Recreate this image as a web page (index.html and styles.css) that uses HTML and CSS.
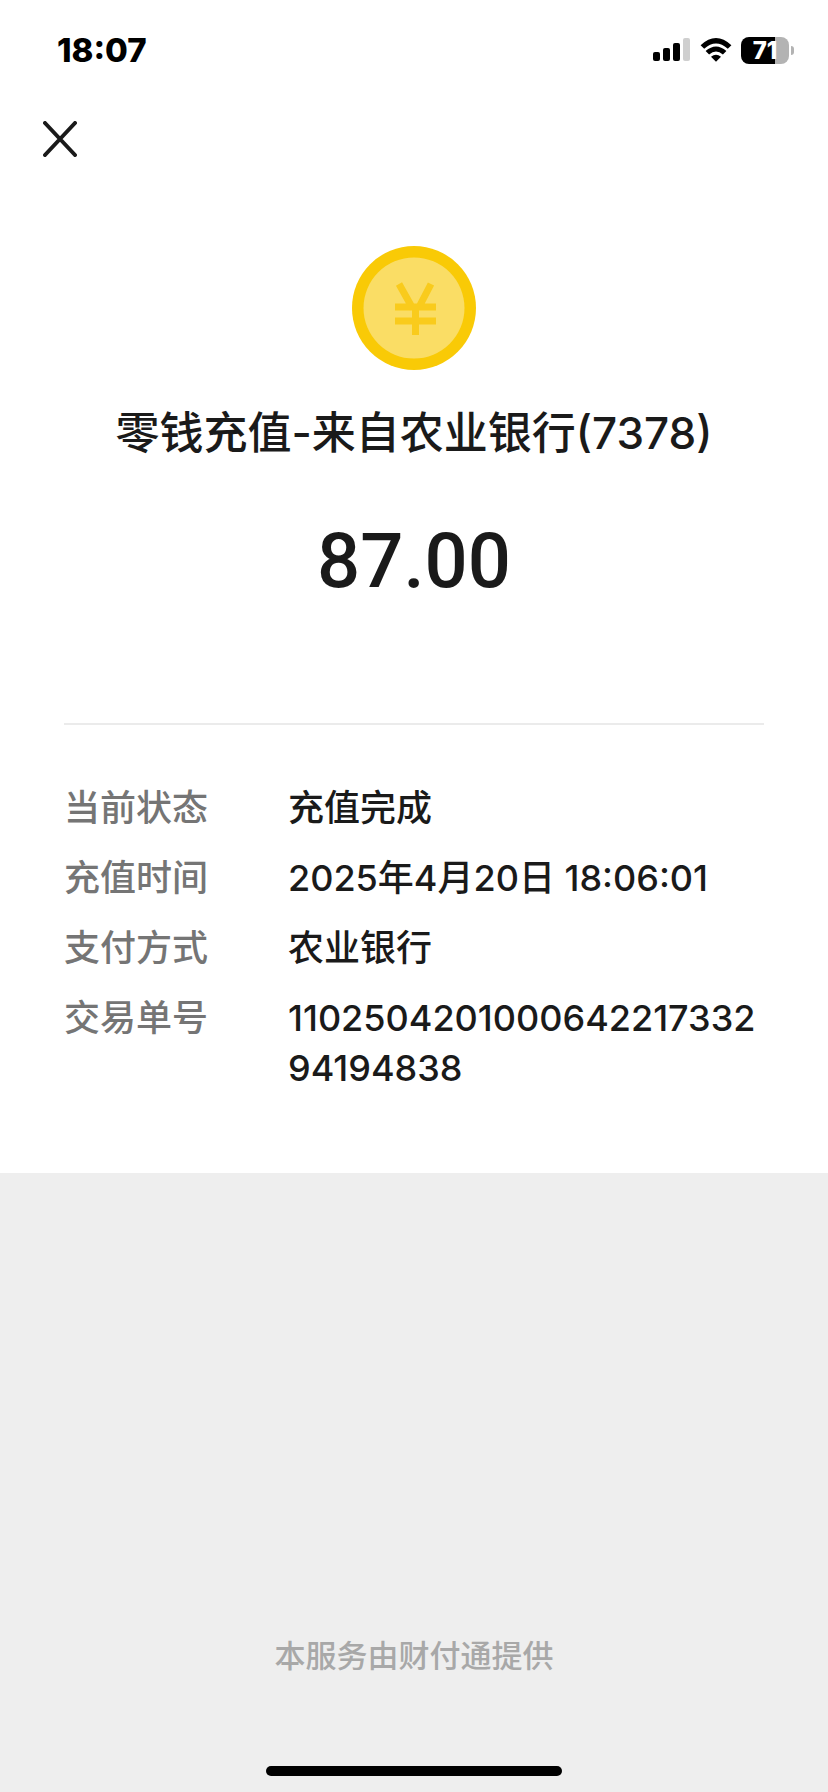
FILE: index.html
```html
<!DOCTYPE html>
<html lang="zh-CN">
<head>
  <meta charset="UTF-8" />
  <meta name="viewport" content="width=device-width, initial-scale=1" />
  <title>零钱充值</title>
  <link rel="stylesheet" href="styles.css">
</head>
<body>
  <div class="sheet">
    <div class="status-bar">
      <span class="time">18:07</span>
      <div class="status-icons">
        <svg class="signal" viewBox="0 0 38 24" aria-hidden="true">
          <rect x="0" y="14" width="7" height="9" rx="2" />
          <rect x="10" y="10" width="7" height="13" rx="2" />
          <rect x="20" y="5" width="7" height="18" rx="2" />
          <rect x="30" y="0" width="7" height="23" rx="2" fill="#cfcfcf" />
        </svg>
        <svg class="wifi" viewBox="0 0 32 24" aria-hidden="true">
          <path d="M0.6 7.2 Q16 -7.2 31.4 7.2 L27.8 10.8 Q16 0.2 4.2 10.8 Z" />
          <path d="M5.6 12.9 Q16 3.9 26.4 12.9 L22.9 16.4 Q16 10.8 9.1 16.4 Z" />
          <path d="M11 18.8 Q16 14.8 21 18.8 L16 23.8 Z" />
        </svg>
        <div class="battery">
          <div class="battery-body">71</div>
          <div class="battery-cap"></div>
        </div>
      </div>
    </div>

    <div class="nav">
      <button class="close" aria-label="关闭">
        <svg viewBox="0 0 34 36"><path d="M2 2 L32 34 M32 2 L2 34" /></svg>
      </button>
    </div>

    <div class="summary">
      <svg class="coin" viewBox="0 0 124 124" aria-hidden="true">
        <circle cx="62" cy="62" r="62" fill="#f9ca06" />
        <circle cx="62" cy="62" r="50.5" fill="#fadd65" />
        <path d="M47 38 L61 63 M79 38 L66 63 M43 61 H84 M43 75 H84 M63.5 60 V89" fill="none" stroke="#f9cb1c" stroke-width="7" />
      </svg>
      <h1 class="title">零钱充值-来自农业银行(7378)</h1>
      <div class="amount">87.00</div>
    </div>

    <dl class="details">
      <div class="row"><dt>当前状态</dt><dd>充值完成</dd></div>
      <div class="row"><dt>充值时间</dt><dd>2025年4月20日 18:06:01</dd></div>
      <div class="row"><dt>支付方式</dt><dd>农业银行</dd></div>
      <div class="row"><dt>交易单号</dt><dd>110250420100064221733294194838</dd></div>
    </dl>
  </div>

  <div class="footer">
    <p class="provider">本服务由财付通提供</p>
    <div class="home-indicator"></div>
  </div>
</body>
</html>
```
FILE: styles.css
```css
* { box-sizing: border-box; }
body {
  font-family: Inter, "Noto Sans CJK SC", sans-serif;
  margin: 0;
  min-height: 100vh;
  background: #eee;
  color: #1a1a1a;
  display: flex;
  flex-direction: column;
}
.sheet {
  background: #fff;
  padding-bottom: 80px;
}
.status-bar {
  height: 100px;
  padding: 0 34px 0 57px;
  display: flex;
  justify-content: space-between;
  align-items: center;
  color: #000;
}
.time {
  font-size: 33px;
  font-weight: 800;
}
.status-icons {
  display: flex;
  align-items: center;
  gap: 9px;
}
.signal {
  width: 38px;
  height: 24px;
}
.wifi {
  width: 32px;
  height: 24px;
}
.battery {
  display: flex;
  align-items: center;
  gap: 2px;
}
.battery-body {
  width: 48px;
  height: 27px;
  border-radius: 8px;
  background: linear-gradient(to right, #000 71%, #b3b3b3 71%);
  color: #fff;
  font-size: 24px;
  font-weight: 800;
  line-height: 27px;
  text-align: center;
}
.battery-cap {
  width: 3px;
  height: 9px;
  border-radius: 0 4px 4px 0;
  background: #b3b3b3;
}
.nav {
  padding: 14px 35px;
}
.close {
  display: block;
  width: 50px;
  height: 50px;
  padding: 7px 8px;
  border: none;
  background: none;
  cursor: pointer;
}
.close svg {
  display: block;
  width: 34px;
  height: 36px;
  fill: none;
  stroke: #1a1a1a;
  stroke-width: 4;
  stroke-linecap: round;
}
.summary {
  margin: 0 64px;
  padding: 68px 0 112px;
  border-bottom: 2px solid #ebebeb;
  display: flex;
  flex-direction: column;
  align-items: center;
  text-align: center;
}
.coin {
  width: 124px;
  height: 124px;
}
.title {
  margin: 33px 0 48px;
  font-size: 44px;
  font-weight: 500;
  line-height: 60px;
}
.amount {
  font-family: Roboto, sans-serif;
  font-size: 76px;
  font-weight: 500;
  line-height: 100px;
}
.details {
  margin: 0;
  padding: 58px 64px 0;
  display: flex;
  flex-direction: column;
  gap: 20px;
  font-size: 36px;
  font-weight: 500;
  line-height: 50px;
}
.row {
  display: flex;
}
.row dt {
  flex: 0 0 224px;
  color: #757575;
}
.row dd {
  flex: 1;
  min-width: 0;
  margin: 0;
  word-break: break-all;
}
.footer {
  margin-top: auto;
  padding-bottom: 16px;
  display: flex;
  flex-direction: column;
  align-items: center;
}
.provider {
  margin: 0 0 88px;
  color: #a8a8a8;
  font-size: 31px;
  font-weight: 500;
  line-height: 44px;
}
.home-indicator {
  width: 296px;
  height: 10px;
  border-radius: 5px;
  background: #000;
}
```
